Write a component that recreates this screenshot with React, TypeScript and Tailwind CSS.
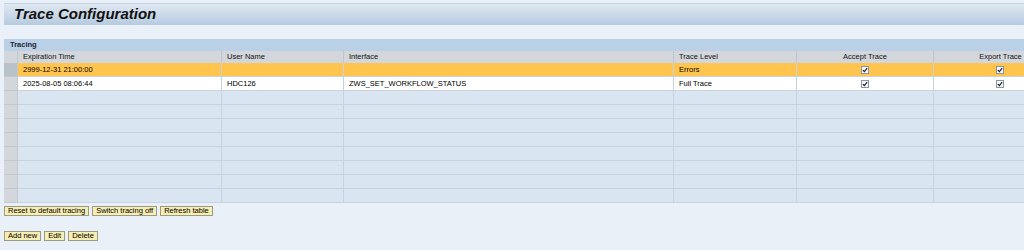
const cols = "grid grid-cols-[14px_204px_122px_330px_123px_137px_133px]";

type Row = { exp: string; user: string; iface: string; level: string; accept: boolean; exportT: boolean };

const rows: Row[] = [
  { exp: "2999-12-31 21:00:00", user: "", iface: "", level: "Errors", accept: true, exportT: true },
  { exp: "2025-08-05 08:06:44", user: "HDC126", iface: "ZWS_SET_WORKFLOW_STATUS", level: "Full Trace", accept: true, exportT: true },
];

function Check() {
  return (
    <span className="inline-flex h-[8px] w-[8px] items-center justify-center border border-[#8a949e] bg-[#f4f6f8]">
      <svg viewBox="0 0 7 7" className="h-[6px] w-[6px]">
        <path d="M1 3.6 L2.8 5.3 L6 1.4" fill="none" stroke="#1f2327" strokeWidth="1.4" />
      </svg>
    </span>
  );
}

function Btn({ label }: { label: string }) {
  return (
    <button className="h-[10px] border border-[#9c9a86] bg-[#f7eeb2] px-[3px] text-[7.5px] leading-[8px] text-black">
      {label}
    </button>
  );
}

export default function App() {
  const empty = Array.from({ length: 8 });
  const cell = "border-r border-b border-[#c7d3e0] px-[5px] flex items-center";
  return (
    <div className="w-[1024px] h-[250px] overflow-hidden bg-[#e9f0f7] font-['Liberation_Sans',Arial,sans-serif] text-black">
      <div className="ml-[4px] mt-[3px] h-[22px] w-[1020px] border-t border-[#c3d2e0] bg-gradient-to-b from-[#dfe8f1] to-[#b6cadf] flex items-center pl-[10px]">
        <h1 className="text-[15px] font-bold italic text-[#111]">Trace Configuration</h1>
      </div>

      <div className="ml-[4px] mt-[14px] w-[1063px]">
        <div className="h-[12px] bg-[#bad0e6] pl-[6px] text-[7.5px] font-bold leading-[12px] text-[#1a2633]">Tracing</div>

        <div className={`${cols} h-[12px] bg-[#d3d7db] text-[7.5px] text-[#111]`}>
          <div className="border-r border-[#c0c6cc]" />
          <div className="border-r border-[#c0c6cc] pl-[5px] leading-[12px]">Expiration Time</div>
          <div className="border-r border-[#c0c6cc] pl-[5px] leading-[12px]">User Name</div>
          <div className="border-r border-[#c0c6cc] pl-[5px] leading-[12px]">Interface</div>
          <div className="border-r border-[#c0c6cc] pl-[5px] leading-[12px]">Trace Level</div>
          <div className="border-r border-[#c0c6cc] text-center leading-[12px]">Accept Trace</div>
          <div className="text-center leading-[12px]">Export Trace</div>
        </div>

        {rows.map((r, i) => (
          <div
            key={i}
            className={`${cols} h-[14px] text-[7.5px] ${i === 0 ? "bg-[#ffc54f]" : "bg-white"}`}
          >
            <div className={`border-r border-b border-[#c3c8cd] ${i === 0 ? "bg-[#b9c1c9]" : "bg-[#d3d7db]"}`} />
            <div className={cell}>{r.exp}</div>
            <div className={cell}>{r.user}</div>
            <div className={cell}>{r.iface}</div>
            <div className={cell}>{r.level}</div>
            <div className={`${cell} justify-center`}>{r.accept && <Check />}</div>
            <div className={`${cell} justify-center`}>{r.exportT && <Check />}</div>
          </div>
        ))}

        {empty.map((_, i) => (
          <div key={i} className={`${cols} h-[14px] bg-[#dae5f2]`}>
            <div className="border-r border-b border-[#c3c8cd] bg-[#d3d7db]" />
            <div className="border-r border-b border-[#c7d3e0]" />
            <div className="border-r border-b border-[#c7d3e0]" />
            <div className="border-r border-b border-[#c7d3e0]" />
            <div className="border-r border-b border-[#c7d3e0]" />
            <div className="border-r border-b border-[#c7d3e0]" />
            <div className="border-r border-b border-[#c7d3e0]" />
          </div>
        ))}
      </div>

      <div className="ml-[4px] mt-[3px] flex gap-[3px]">
        <Btn label="Reset to default tracing" />
        <Btn label="Switch tracing off" />
        <Btn label="Refresh table" />
      </div>

      <div className="ml-[4px] mt-[15px] flex gap-[3px]">
        <Btn label="Add new" />
        <Btn label="Edit" />
        <Btn label="Delete" />
      </div>
    </div>
  );
}
